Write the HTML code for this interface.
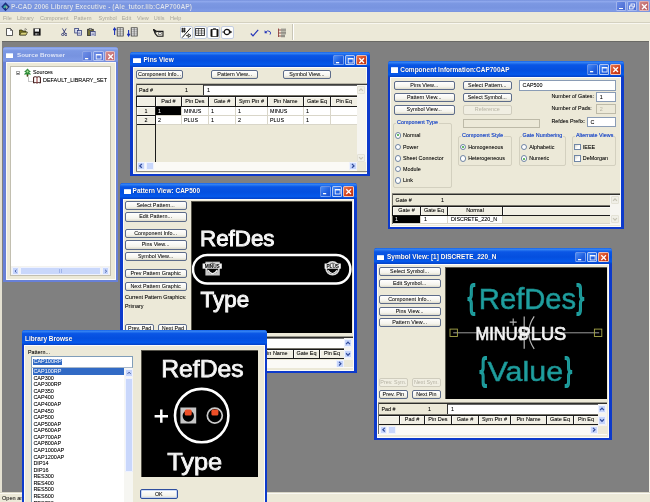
<!DOCTYPE html><html><head><meta charset="utf-8"><title>P-CAD 2006 Library Executive</title><style>
*{box-sizing:border-box;margin:0;padding:0}
html,body{width:650px;height:502px;overflow:hidden;background:#808080;}
body{will-change:transform;position:relative;font-family:"Liberation Sans",sans-serif;font-size:5.4px;color:#000;line-height:1;text-shadow:0 0 0.25px rgba(0,0,0,0.3)}
.a{position:absolute}
.t{position:absolute;white-space:nowrap;line-height:1}
.win{position:absolute;background:#0d3acb;border-radius:3px 3px 0 0;overflow:hidden}
.win .tb{position:absolute;left:0;top:0;right:0;height:16px;background:linear-gradient(#1763e8 0%,#3382f3 9%,#0a56e5 24%,#044fdf 56%,#0558ea 84%,#0340c6 100%)}
.win.in{background:#6880d6}
.win.in .tb{background:linear-gradient(#7a96e2 0%,#93abee 10%,#7b98e3 25%,#7793e0 60%,#7e9ae6 88%,#748cd9 100%)}
.win .cl{position:absolute;left:2.5px;right:2.5px;top:16px;bottom:2.5px;background:#ece9d8;box-shadow:inset 0 0 0 1px #fdfcf8}
.ttl{position:absolute;font-weight:bold;color:#fff;font-size:6.5px;white-space:nowrap;line-height:1;text-shadow:0.4px 0.4px 0 #0a2a80}
.in .ttl{color:#dfe6f8;text-shadow:none}
.wicon{position:absolute;width:7.2px;height:5.2px;background:#fff;border-top:1px solid #cfe0ff;border-radius:0.5px}
.cb{position:absolute;width:10.5px;height:10.5px;border-radius:1.5px;border:1px solid rgba(255,255,255,0.65);background:linear-gradient(135deg,#4b8cf5,#1f5fe0 60%,#1a4fcf)}
.cb.x{background:linear-gradient(135deg,#e8774f,#d3421c 60%,#b93313)}
.in .cb{background:linear-gradient(135deg,#6f8fe6,#4f70d6);border-color:rgba(235,240,255,0.6)}
.in .cb.x{background:linear-gradient(135deg,#d48d8d,#c0626a)}
.btn{position:absolute;border:1px solid #5d6c8a;border-radius:2px;background:linear-gradient(#ffffff,#f4f3ec 70%,#dcd9c9);text-align:center;white-space:nowrap;font-size:5.4px;color:#111;overflow:hidden}
.btn.ok{border-color:#2f4f9e;box-shadow:inset 0 0 0 0.8px #bcd0f5}
.btn.dis{text-shadow:none;border-color:#cfccbd;color:#b5b2a3;background:#f0eee2}
.fld{position:absolute;background:#fff;border:0.7px solid #8a9cb5;font-size:5.4px;white-space:nowrap;overflow:hidden}
.fld.dis{text-shadow:none;background:#ece9d8;border-color:#bdbaa8;color:#b5b2a3}
.grp{position:absolute;border:0.7px solid #d3d0bf;border-radius:2px}
.gl{position:absolute;text-shadow:0 0 0.25px rgba(24,70,200,0.7);color:#1846c8;background:#ece9d8;font-size:5.4px;white-space:nowrap;line-height:1;padding:0 1px}
.rd{position:absolute;width:6.4px;height:6.4px;border-radius:50%;border:1px solid #7288a8;background:radial-gradient(#fff 55%,#dcdad0)}
.rd.on::after{content:"";position:absolute;left:1.2px;top:1.2px;width:2px;height:2px;border-radius:50%;background:#35a535}
.ck{position:absolute;width:6.4px;height:6.4px;border:1px solid #6f86a6;background:linear-gradient(135deg,#dcdad0,#fff 60%)}
.grid{position:absolute;background:#ece9d8;border-top:1px solid #55534a;border-left:1px solid #77756a;}
.hc{position:absolute;background:#ece9d8;border:1px solid #1c1c1c;border-top-width:1.2px;text-align:center;font-size:5.4px;white-space:nowrap;overflow:hidden;line-height:1}
.wc{position:absolute;background:#fff;border-right:0.6px solid #d6d3c6;border-bottom:0.6px solid #d6d3c6;font-size:5.4px;white-space:nowrap;overflow:hidden;line-height:1}
.sb{position:absolute;background:#f4f3ee}
.sa{position:absolute;background:#c6d5fb;border:0.5px solid #eef2ff;border-radius:1px}
.sa svg{position:absolute;left:0;top:0;width:100%;height:100%}
.cv{position:absolute;background:#000;overflow:hidden}
.cv .big{position:absolute;color:#fff;white-space:nowrap;line-height:1}
</style></head><body>
<div class="a" style="left:0;top:0;width:650px;height:12px;background:linear-gradient(#7590dc 0%,#8ea7ec 12%,#7b97e2 30%,#7894e0 65%,#7f9be6 90%,#7a93dc 100%)"></div>
<svg class="a" style="left:1px;top:1.5px" width="9" height="9.5" viewBox="0 0 9 9.5"><path d="M4.5 0.3L8.7 4.8L4.5 9.2L0.3 4.8Z" fill="#1b2e7c"/><path d="M2 5.2L4.4 2.6L5.2 4.4L3.6 6.6Z" fill="#35b0a8"/><path d="M5 3.2L7 5L5.4 7.2L4.6 5.4Z" fill="#8fae9a"/></svg>
<div class="t" style="left:11px;top:3.9px;font-weight:bold;font-size:6.68px;color:#dbe3f7;letter-spacing:0.0px" id="mt">P-CAD 2006 Library Executive - (Ale_tutor.lib:CAP700AP)</div>
<div class="a" style="left:616px;top:0.5px;width:9.5px;height:10.5px;border-radius:1.5px;border:1px solid rgba(240,244,255,0.5);background:linear-gradient(135deg,#6d8de6,#4668d2)"><div class="a" style="left:1.8px;top:6px;width:4px;height:1.4px;background:#fff"></div></div>
<div class="a" style="left:627px;top:0.5px;width:9.5px;height:10.5px;border-radius:1.5px;border:1px solid rgba(240,244,255,0.5);background:linear-gradient(135deg,#6d8de6,#4668d2)"><svg class="a" style="left:0;top:0" width="8.3" height="9.3" viewBox="0 0 8.3 9.3"><rect x="3" y="2" width="3.5" height="3" fill="none" stroke="#fff" stroke-width="0.8"/><rect x="1.6" y="4" width="3.5" height="3" fill="#6b89de" stroke="#fff" stroke-width="0.8"/></svg></div>
<div class="a" style="left:638.5px;top:0.5px;width:10px;height:10.5px;border-radius:1.5px;border:1px solid rgba(255,240,240,0.5);background:linear-gradient(135deg,#d08888,#b85860)"><svg class="a" style="left:0;top:0" width="8.8" height="9.3" viewBox="0 0 8.8 9.3"><path d="M2 2.2L6.8 7.2M6.8 2.2L2 7.2" stroke="#fff" stroke-width="1.3" fill="none"/></svg></div>
<div class="a" style="left:0;top:12px;width:650px;height:11px;background:#ece9d8"></div>
<div class="t" style="left:3px;top:15.6px;font-size:5.5px;color:#a7a599;text-shadow:none">File</div>
<div class="t" style="left:17px;top:15.6px;font-size:5.5px;color:#a7a599;text-shadow:none">Library</div>
<div class="t" style="left:40px;top:15.6px;font-size:5.5px;color:#a7a599;text-shadow:none">Component</div>
<div class="t" style="left:73.8px;top:15.6px;font-size:5.5px;color:#a7a599;text-shadow:none">Pattern</div>
<div class="t" style="left:98.5px;top:15.6px;font-size:5.5px;color:#a7a599;text-shadow:none">Symbol</div>
<div class="t" style="left:121.7px;top:15.6px;font-size:5.5px;color:#a7a599;text-shadow:none">Edit</div>
<div class="t" style="left:137px;top:15.6px;font-size:5.5px;color:#a7a599;text-shadow:none">View</div>
<div class="t" style="left:153.8px;top:15.6px;font-size:5.5px;color:#a7a599;text-shadow:none">Utils</div>
<div class="t" style="left:170px;top:15.6px;font-size:5.5px;color:#a7a599;text-shadow:none">Help</div>
<div class="a" style="left:0;top:22.5px;width:650px;height:18.5px;background:#ece9d8;border-top:0.6px solid #f8f7f0"></div>
<div class="a" style="left:0;top:22px;width:650px;height:0.6px;background:#d4d1c0"></div>
<div class="a" style="left:292px;top:24px;width:0.7px;height:16px;background:#c9c6b6"></div>
<div class="a" style="left:292.7px;top:24px;width:0.7px;height:16px;background:#fff"></div>
<svg class="a" style="left:6px;top:28px" width="7" height="8" viewBox="0 0 7 8"><path d="M0.5 0.5H4.5L6.5 2.5V7.5H0.5Z" fill="#fff" stroke="#333" stroke-width="0.8"/><path d="M4.5 0.5V2.5H6.5" fill="none" stroke="#333" stroke-width="0.6"/></svg>
<svg class="a" style="left:19px;top:28px" width="9" height="8" viewBox="0 0 9 8"><path d="M0.5 7V2H3L3.8 3H7V7Z" fill="#7a7420" stroke="#2a2a10" stroke-width="0.7"/><path d="M0.8 7L2.3 4.2H8.6L7 7Z" fill="#d9d27a" stroke="#2a2a10" stroke-width="0.6"/><path d="M5.5 1.2Q6.8 0.4 7.8 1.6" stroke="#222" stroke-width="0.6" fill="none"/></svg>
<svg class="a" style="left:33px;top:28px" width="8" height="8" viewBox="0 0 8 8"><rect x="0.4" y="0.4" width="7.2" height="7.2" fill="#111"/><rect x="1.8" y="0.8" width="4.2" height="2.8" fill="#f0f0f0"/><rect x="2.2" y="5" width="3.4" height="2.4" fill="#8a8a8a"/><rect x="4.4" y="5.3" width="0.9" height="1.8" fill="#111"/></svg>
<svg class="a" style="left:60.6px;top:28px" width="6.6" height="8.4" viewBox="0 0 7 9"><path d="M1.5 0.5L4.6 6M5.5 0.5L2.4 6" stroke="#27306e" stroke-width="0.9" fill="none"/><circle cx="1.8" cy="7" r="1.2" fill="none" stroke="#27306e" stroke-width="0.9"/><circle cx="5.2" cy="7" r="1.2" fill="none" stroke="#27306e" stroke-width="0.9"/></svg>
<svg class="a" style="left:73.6px;top:28.2px" width="8.2" height="7.6" viewBox="0 0 9 9"><rect x="0.5" y="0.5" width="4.6" height="5.4" fill="#dfe3f3" stroke="#2b3675" stroke-width="0.9"/><rect x="3.6" y="3" width="4.8" height="5.5" fill="#eef0fa" stroke="#2b3675" stroke-width="0.9"/><path d="M4.6 5H7.4M4.6 6.6H7.4" stroke="#2b3675" stroke-width="0.6"/></svg>
<svg class="a" style="left:86.8px;top:27.8px" width="9" height="8.6" viewBox="0 0 10 10"><rect x="0.5" y="1.5" width="6.5" height="7.5" fill="#77743a" stroke="#222" stroke-width="0.9"/><rect x="2.2" y="0.6" width="3" height="1.8" fill="#bbb" stroke="#222" stroke-width="0.5"/><rect x="4" y="4" width="5.2" height="5.5" fill="#eef0fa" stroke="#2b3675" stroke-width="0.9"/><path d="M5 6H8.2M5 7.6H8.2" stroke="#2b3675" stroke-width="0.6"/></svg>
<svg class="a" style="left:112.6px;top:27.4px" width="11" height="10" viewBox="0 0 11 10"><path d="M1.6 8V1.6M0.2 3.2L1.6 1L3 3.2" stroke="#1a30b8" stroke-width="1.1" fill="none"/><rect x="4.2" y="0.8" width="6" height="8.2" fill="#fff" stroke="#333" stroke-width="0.8"/><path d="M4.2 2.85H10.2M4.2 4.9H10.2M4.2 6.95H10.2M7.2 0.8V9" stroke="#444" stroke-width="0.6"/></svg>
<svg class="a" style="left:126.6px;top:27.4px" width="11" height="10" viewBox="0 0 11 10"><path d="M1.6 3V8.4M0.2 6.8L1.6 9L3 6.8" stroke="#1a30b8" stroke-width="1.1" fill="none"/><rect x="4.2" y="0.8" width="6" height="8.2" fill="#fff" stroke="#333" stroke-width="0.8"/><path d="M4.2 2.85H10.2M4.2 4.9H10.2M4.2 6.95H10.2M7.2 0.8V9" stroke="#444" stroke-width="0.6"/></svg>
<svg class="a" style="left:153.4px;top:28.6px" width="11" height="8" viewBox="0 0 11 8"><path d="M0.6 0.6L3.8 2.4H10V7.2H4.4L2.2 4.6Z" fill="#e9e6d6" stroke="#1a1a1a" stroke-width="1.1"/><path d="M0.6 0.6L3.2 3.6" stroke="#1a1a1a" stroke-width="1.2"/><rect x="5.4" y="3.8" width="3.2" height="1.8" fill="#fff" stroke="#333" stroke-width="0.5"/></svg>
<div class="a" style="left:180px;top:25.5px;width:13.2px;height:13.5px;background:#fdfdfb;border:1px solid #c3cde0;border-radius:2px"></div>
<div class="a" style="left:193.5px;top:25.5px;width:13.2px;height:13.5px;background:#fdfdfb;border:1px solid #c3cde0;border-radius:2px"></div>
<div class="a" style="left:207px;top:25.5px;width:13.2px;height:13.5px;background:#fdfdfb;border:1px solid #c3cde0;border-radius:2px"></div>
<div class="a" style="left:220.5px;top:25.5px;width:13.2px;height:13.5px;background:#fdfdfb;border:1px solid #c3cde0;border-radius:2px"></div>
<svg class="a" style="left:181px;top:26.5px" width="11.5" height="11.5" viewBox="0 0 11.5 11.5"><path d="M1.6 0.8V5.6M3.4 0.8V5.6M0.4 1.8H4.6M0.4 3.2H4.6M0.4 4.6H4.6" stroke="#111" stroke-width="0.8"/><path d="M1.2 10.6L9.6 1" stroke="#111" stroke-width="1"/><path d="M5 8.6H7.2M7.2 6.8L10 8.6L7.2 10.4Z" stroke="#111" stroke-width="0.8" fill="#fff"/></svg>
<svg class="a" style="left:195.3px;top:28px" width="10" height="8" viewBox="0 0 10 8"><rect x="0.6" y="0.6" width="8.8" height="6.8" fill="#fff" stroke="#222" stroke-width="0.9"/><path d="M0.6 2.9H9.4M0.6 5.1H9.4M3.5 0.6V7.4M6.5 0.6V7.4" stroke="#222" stroke-width="0.6"/></svg>
<svg class="a" style="left:209.6px;top:27.6px" width="9" height="9.4" viewBox="0 0 9 9.4"><rect x="1.3" y="1.6" width="6.4" height="6.8" fill="#fff" stroke="#111" stroke-width="0.7"/><path d="M1.5 1.4V8.6M7.5 1.4V8.6" stroke="#111" stroke-width="1.9"/><path d="M3.4 1.4V0.5H5.6V1.4" stroke="#111" stroke-width="0.7" fill="none"/></svg>
<svg class="a" style="left:222.4px;top:28.2px" width="10.5" height="8" viewBox="0 0 10.5 8"><path d="M0.4 4H2.4M7.4 4H8.6" stroke="#111" stroke-width="1"/><circle cx="4.9" cy="4" r="2.7" fill="#fff" stroke="#111" stroke-width="1.2"/><path d="M8.2 2.4L10.2 4L8.2 5.6Z" fill="#111"/></svg>
<svg class="a" style="left:249.5px;top:29px" width="9" height="8" viewBox="0 0 9 8"><path d="M0.8 4.5L3 6.8L8.2 0.8" stroke="#2233b8" stroke-width="1.2" fill="none"/></svg>
<svg class="a" style="left:263.5px;top:29px" width="8" height="7" viewBox="0 0 8 7"><path d="M1.2 3.5Q3.8 0.6 6 2.6Q7.2 4 6 5.6" stroke="#2233b8" stroke-width="0.9" fill="none"/><path d="M0.6 1.2V4.2H3.4Z" fill="#2233b8"/></svg>
<svg class="a" style="left:277px;top:27.5px" width="10" height="10" viewBox="0 0 10 10"><path d="M1.5 0.5V9M1.5 2H4M1.5 5H4M1.5 8H4" stroke="#7a1a1a" stroke-width="0.7" fill="none"/><path d="M4 1.2H9M4 2.8H9M4 4.3H9M4 5.8H9M4 7.3H8M4 8.7H8" stroke="#333" stroke-width="0.6"/></svg>
<div class="a" style="left:0;top:41px;width:650px;height:451px;background:#808080;border-top:1px solid #6a6a66"></div>
<div class="a" style="left:0;top:41px;width:1.5px;height:451px;background:#e4e1d2"></div>
<div class="a" style="left:649px;top:41px;width:1px;height:451px;background:#f4f2e8"></div>
<div class="a" style="left:0;top:492px;width:650px;height:10px;background:#ece9d8;border-top:1px solid #d8d5c6"></div>
<div class="a" style="left:0;top:493px;width:650px;height:0.8px;background:#faf9f3"></div>
<div class="t" style="left:2px;top:495.6px;font-size:5.6px;color:#222">Open an</div>
<div class="win in" style="left:3px;top:47.3px;width:115px;height:235.2px">
<div class="tb" style="height:14.8px"></div>
<div class="wicon" style="left:3.2px;top:5.5px"></div>
<div class="ttl" style="left:14px;top:4.7px;font-size:6.26px">Source Browser</div>
<div class="cb" style="left:78.5px;top:3.4px;border-color:rgba(255,255,255,0.32)"><svg class="a" style="left:0;top:0" width="9.3" height="9.3" viewBox="0 0 9.3 9.3"><rect x="2" y="6" width="3.2" height="1.3" fill="#fff"/></svg></div>
<div class="cb" style="left:90px;top:3.4px"><svg class="a" style="left:0;top:0" width="9.3" height="9.3" viewBox="0 0 9.3 9.3"><rect x="2.2" y="2.6" width="4.9" height="4.4" fill="none" stroke="#fff" stroke-width="0.8"/><rect x="2.2" y="2.2" width="4.9" height="1.2" fill="#fff"/></svg></div>
<div class="cb x" style="left:101.5px;top:3.4px"><svg class="a" style="left:0;top:0" width="9.3" height="9.3" viewBox="0 0 9.3 9.3"><path d="M2.3 2.3L7 7M7 2.3L2.3 7" stroke="#fff" stroke-width="1.3" fill="none"/></svg></div>
<div class="cl" style="top:14.8px;left:2.5px;right:2.5px;bottom:2.5px">
<div class="a" style="left:0;top:0;width:1px;height:100%;background:#fbfaf5"></div>
<div class="a" style="left:4.6px;top:4.4px;width:101px;height:209.2px;background:#fff;border:1px solid #c2bfb0"></div>
<div class="a" style="left:10px;top:8.6px;width:4.4px;height:4.4px;border:1px solid #a8a8a8;background:#fff"></div><div class="a" style="left:11.2px;top:10.5px;width:2px;height:0.7px;background:#666"></div>
<div class="a" style="left:22px;top:14.5px;width:0.6px;height:4.5px;background:#c4c4c4"></div><div class="a" style="left:22px;top:18.6px;width:5px;height:0.6px;background:#c4c4c4"></div>
<svg class="a" style="left:17.2px;top:6.2px" width="9" height="9" viewBox="0 0 9 9"><path d="M4.5 0.5L1 4H3L0.8 6.5H3.8V8.5H5.2V6.5H8.2L6 4H8Z" fill="#2f8f3a"/><rect x="3.8" y="6.5" width="1.4" height="2" fill="#5a3a1a"/><circle cx="4.5" cy="3.5" r="1" fill="#b7e3a0"/></svg>
<div class="t" style="left:27.5px;top:8.3px;font-size:5.4px">Sources</div>
<svg class="a" style="left:27px;top:14.4px" width="8" height="8" viewBox="0 0 8 8"><path d="M0.6 1.2Q2.3 0.2 4 1.2Q5.7 0.2 7.4 1.2V7Q5.7 6 4 7Q2.3 6 0.6 7Z" fill="#fff" stroke="#3a1010" stroke-width="1"/><path d="M4 1.2V7" stroke="#7a1a1a" stroke-width="0.9"/></svg>
<div class="t" style="left:37.5px;top:16.3px;font-size:5.46px" id="dls">DEFAULT_LIBRARY_SET</div>
<div class="sb" style="left:5.6px;top:204.4px;width:99px;height:8.8px"></div>
<div class="sa" style="left:6.4px;top:204.5px;width:7.6px;height:8.4px"><svg viewBox="0 0 8.4 8.4"><path d="M5.2 2.2L3 4.2L5.2 6.2" stroke="#2f4a9a" stroke-width="1.3" fill="none"/></svg></div>
<div class="sa" style="left:96.2px;top:204.5px;width:7.6px;height:8.4px"><svg viewBox="0 0 8.4 8.4"><path d="M3.2 2.2L5.4 4.2L3.2 6.2" stroke="#2f4a9a" stroke-width="1.3" fill="none"/></svg></div>
<div class="a" style="left:14.4px;top:204.5px;width:81.4px;height:8.4px;background:#c9d7fb;border:0.5px solid #eef2ff;border-radius:1px"></div><div class="a" style="left:53.5px;top:207px;width:3px;height:3.5px;border-left:0.6px solid #9fb4ea;border-right:0.6px solid #9fb4ea"></div>
</div></div>
<div class="win " style="left:130.3px;top:52px;width:239.7px;height:124px">
<div class="tb" style="height:15px"></div>
<div class="wicon" style="left:3.2px;top:5.5px"></div>
<div class="ttl" style="left:13.2px;top:4.7px;font-size:6.5px">Pins View</div>
<div class="cb" style="left:203.2px;top:2.8px;border-color:rgba(255,255,255,0.32)"><svg class="a" style="left:0;top:0" width="9.3" height="9.3" viewBox="0 0 9.3 9.3"><rect x="2" y="6" width="3.2" height="1.3" fill="#fff"/></svg></div>
<div class="cb" style="left:214.7px;top:2.8px"><svg class="a" style="left:0;top:0" width="9.3" height="9.3" viewBox="0 0 9.3 9.3"><rect x="2.2" y="2.6" width="4.9" height="4.4" fill="none" stroke="#fff" stroke-width="0.8"/><rect x="2.2" y="2.2" width="4.9" height="1.2" fill="#fff"/></svg></div>
<div class="cb x" style="left:226.2px;top:2.8px"><svg class="a" style="left:0;top:0" width="9.3" height="9.3" viewBox="0 0 9.3 9.3"><path d="M2.3 2.3L7 7M7 2.3L2.3 7" stroke="#fff" stroke-width="1.3" fill="none"/></svg></div>
<div class="cl" style="top:15px;left:2.5px;right:2.5px;bottom:2.5px">
<div class="btn " style="left:3.4px;top:3.2px;width:46.6px;height:8.8px;line-height:7.200000000000001px">Component Info...</div>
<div class="btn " style="left:78.2px;top:3.2px;width:47.4px;height:8.8px;line-height:7.200000000000001px">Pattern View...</div>
<div class="btn " style="left:150.2px;top:3.2px;width:47.6px;height:8.8px;line-height:7.200000000000001px">Symbol View...</div>
<div class="a" style="left:3.2px;top:16px;width:231px;height:1px;background:#b9b6a8;"></div>
<div class="a" style="left:3.2px;top:17px;width:231px;height:1px;background:#3e3e3c;"></div>
<div class="a" style="left:3.2px;top:17px;width:1px;height:87px;background:#6f6d64;"></div>
<div class="t" style="left:6.2px;top:21.2px;">Pad #</div>
<div class="t" style="left:52.2px;top:21.2px;">1</div>
<div class="a" style="left:70.2px;top:18px;width:1px;height:10px;background:#333;"></div>
<div class="a" style="left:71.2px;top:18px;width:153px;height:1px;background:#666;"></div>
<div class="a" style="left:71.2px;top:19px;width:153px;height:9px;background:#fff;"></div>
<div class="t" style="left:74.2px;top:21.2px;">1</div>
<div class="a" style="left:3.2px;top:28px;width:221px;height:1px;background:#77756c;"></div>
<div class="a" style="left:3.2px;top:29px;width:221px;height:11px;background:#1b1b1b;"></div>
<div class="a" style="left:4.2px;top:30px;width:18px;height:9px;background:#f1efe4;box-shadow:inset 1px 1px 0 #fbfaf5;text-align:center;white-space:nowrap;overflow:hidden;line-height:8.4px;font-size:5.5px"></div>
<div class="a" style="left:23.2px;top:30px;width:25px;height:9px;background:#f1efe4;box-shadow:inset 1px 1px 0 #fbfaf5;text-align:center;white-space:nowrap;overflow:hidden;line-height:8.4px;font-size:5.5px">Pad #</div>
<div class="a" style="left:49.2px;top:30px;width:26px;height:9px;background:#f1efe4;box-shadow:inset 1px 1px 0 #fbfaf5;text-align:center;white-space:nowrap;overflow:hidden;line-height:8.4px;font-size:5.5px">Pin Des</div>
<div class="a" style="left:76.2px;top:30px;width:26px;height:9px;background:#f1efe4;box-shadow:inset 1px 1px 0 #fbfaf5;text-align:center;white-space:nowrap;overflow:hidden;line-height:8.4px;font-size:5.5px">Gate #</div>
<div class="a" style="left:103.2px;top:30px;width:31px;height:9px;background:#f1efe4;box-shadow:inset 1px 1px 0 #fbfaf5;text-align:center;white-space:nowrap;overflow:hidden;line-height:8.4px;font-size:5.5px">Sym Pin #</div>
<div class="a" style="left:135.2px;top:30px;width:35px;height:9px;background:#f1efe4;box-shadow:inset 1px 1px 0 #fbfaf5;text-align:center;white-space:nowrap;overflow:hidden;line-height:8.4px;font-size:5.5px">Pin Name</div>
<div class="a" style="left:171.2px;top:30px;width:26px;height:9px;background:#f1efe4;box-shadow:inset 1px 1px 0 #fbfaf5;text-align:center;white-space:nowrap;overflow:hidden;line-height:8.4px;font-size:5.5px">Gate Eq</div>
<div class="a" style="left:198.2px;top:30px;width:26px;height:9px;background:#f1efe4;box-shadow:inset 1px 1px 0 #fbfaf5;text-align:center;white-space:nowrap;overflow:hidden;line-height:8.4px;font-size:5.5px">Pin Eq</div>
<div class="a" style="left:4.2px;top:40px;width:18px;height:8px;background:#f1efe4;box-shadow:inset 1px 1px 0 #fbfaf5"></div>
<div class="t" style="left:11.7px;top:41.6px;">1</div>
<div class="a" style="left:4.2px;top:48px;width:19px;height:1px;background:#1b1b1b;"></div>
<div class="a" style="left:22.2px;top:40px;width:1px;height:9px;background:#1b1b1b;"></div>
<div class="a" style="left:23.2px;top:40px;width:201px;height:8px;background:#fff;"></div>
<div class="a" style="left:23.2px;top:48px;width:201px;height:1px;background:#d9d6c9;"></div>
<div class="a" style="left:23.2px;top:40px;width:25px;height:8px;background:#000;"></div>
<div class="t" style="left:25.2px;top:41.6px;color:#fff;text-shadow:none">1</div>
<div class="a" style="left:48.2px;top:40px;width:1px;height:9px;background:#d9d6c9;"></div>
<div class="t" style="left:51.2px;top:41.6px;">MINUS</div>
<div class="a" style="left:75.2px;top:40px;width:1px;height:9px;background:#d9d6c9;"></div>
<div class="t" style="left:78.2px;top:41.6px;">1</div>
<div class="a" style="left:102.2px;top:40px;width:1px;height:9px;background:#d9d6c9;"></div>
<div class="t" style="left:105.2px;top:41.6px;">1</div>
<div class="a" style="left:134.2px;top:40px;width:1px;height:9px;background:#d9d6c9;"></div>
<div class="t" style="left:137.2px;top:41.6px;">MINUS</div>
<div class="a" style="left:170.2px;top:40px;width:1px;height:9px;background:#d9d6c9;"></div>
<div class="t" style="left:173.2px;top:41.6px;">1</div>
<div class="a" style="left:197.2px;top:40px;width:1px;height:9px;background:#d9d6c9;"></div>
<div class="a" style="left:4.2px;top:49px;width:18px;height:8px;background:#f1efe4;box-shadow:inset 1px 1px 0 #fbfaf5"></div>
<div class="t" style="left:11.7px;top:50.6px;">2</div>
<div class="a" style="left:4.2px;top:57px;width:19px;height:1px;background:#1b1b1b;"></div>
<div class="a" style="left:22.2px;top:49px;width:1px;height:9px;background:#1b1b1b;"></div>
<div class="a" style="left:23.2px;top:49px;width:201px;height:8px;background:#fff;"></div>
<div class="a" style="left:23.2px;top:57px;width:201px;height:1px;background:#d9d6c9;"></div>
<div class="t" style="left:25.2px;top:50.6px;">2</div>
<div class="a" style="left:48.2px;top:49px;width:1px;height:9px;background:#d9d6c9;"></div>
<div class="t" style="left:51.2px;top:50.6px;">PLUS</div>
<div class="a" style="left:75.2px;top:49px;width:1px;height:9px;background:#d9d6c9;"></div>
<div class="t" style="left:78.2px;top:50.6px;">1</div>
<div class="a" style="left:102.2px;top:49px;width:1px;height:9px;background:#d9d6c9;"></div>
<div class="t" style="left:105.2px;top:50.6px;">2</div>
<div class="a" style="left:134.2px;top:49px;width:1px;height:9px;background:#d9d6c9;"></div>
<div class="t" style="left:137.2px;top:50.6px;">PLUS</div>
<div class="a" style="left:170.2px;top:49px;width:1px;height:9px;background:#d9d6c9;"></div>
<div class="t" style="left:173.2px;top:50.6px;">1</div>
<div class="a" style="left:197.2px;top:49px;width:1px;height:9px;background:#d9d6c9;"></div>
<div class="a" style="left:4.2px;top:58px;width:18px;height:37px;background:#ece9d8;"></div>
<div class="a" style="left:22.2px;top:58px;width:1px;height:37px;background:#1b1b1b;"></div>
<div class="a" style="left:224.2px;top:18px;width:9px;height:77px;background:#f5f4ef;"></div>
<div class="a" style="left:224.7px;top:19px;width:8px;height:8px;background:#f0efe7;border:1px solid #e4e2d6;border-radius:1px"><svg class="a" style="left:-1px;top:-1px;width:8px;height:8px" viewBox="0 0 8.4 8.4"><path d="M2.2 5.2L4.2 3L6.2 5.2" stroke="#c6c4b5" stroke-width="1.3" fill="none"/></svg></div>
<div class="a" style="left:224.7px;top:86.5px;width:8px;height:8px;background:#f0efe7;border:1px solid #e4e2d6;border-radius:1px"><svg class="a" style="left:-1px;top:-1px;width:8px;height:8px" viewBox="0 0 8.4 8.4"><path d="M2.2 3.2L4.2 5.4L6.2 3.2" stroke="#c6c4b5" stroke-width="1.3" fill="none"/></svg></div>
<div class="a" style="left:4.2px;top:95px;width:220px;height:8.5px;background:#fbfaf6;"></div>
<div class="a" style="left:224.2px;top:95px;width:9px;height:8.5px;background:#ece9d8;"></div>
<div class="a" style="left:4.7px;top:95.3px;width:7.8px;height:7.8px;background:#c6d5fb;border:1px solid #eef2ff;border-radius:1px"><svg class="a" style="left:-1px;top:-1px;width:7.8px;height:7.8px" viewBox="0 0 8.4 8.4"><path d="M5.2 2.2L3 4.2L5.2 6.2" stroke="#2f4a9a" stroke-width="1.3" fill="none"/></svg></div>
<div class="a" style="left:13.0px;top:95.3px;width:8.7px;height:7.9px;background:#c9d7fb;border:1px solid #eef2ff;border-radius:1px"></div>
<div class="a" style="left:216.2px;top:95.3px;width:7.8px;height:7.8px;background:#c6d5fb;border:1px solid #eef2ff;border-radius:1px"><svg class="a" style="left:-1px;top:-1px;width:7.8px;height:7.8px" viewBox="0 0 8.4 8.4"><path d="M3.2 2.2L5.4 4.2L3.2 6.2" stroke="#2f4a9a" stroke-width="1.3" fill="none"/></svg></div>
<div class="a" style="left:3.2px;top:103.5px;width:231px;height:0.5px;background:#fbfaf6;"></div>
<div class="a" style="left:3.2px;top:104px;width:231px;height:1px;background:#8c8a80;"></div>
</div></div>
<div class="win " style="left:387.5px;top:61.4px;width:236px;height:168px">
<div class="tb" style="height:15.6px"></div>
<div class="wicon" style="left:3.2px;top:6.1px"></div>
<div class="ttl" style="left:12.7px;top:5.3px;font-size:6.5px">Component Information:CAP700AP</div>
<div class="cb" style="left:199.5px;top:3px;border-color:rgba(255,255,255,0.32)"><svg class="a" style="left:0;top:0" width="9.3" height="9.3" viewBox="0 0 9.3 9.3"><rect x="2" y="6" width="3.2" height="1.3" fill="#fff"/></svg></div>
<div class="cb" style="left:211px;top:3px"><svg class="a" style="left:0;top:0" width="9.3" height="9.3" viewBox="0 0 9.3 9.3"><rect x="2.2" y="2.6" width="4.9" height="4.4" fill="none" stroke="#fff" stroke-width="0.8"/><rect x="2.2" y="2.2" width="4.9" height="1.2" fill="#fff"/></svg></div>
<div class="cb x" style="left:222.5px;top:3px"><svg class="a" style="left:0;top:0" width="9.3" height="9.3" viewBox="0 0 9.3 9.3"><path d="M2.3 2.3L7 7M7 2.3L2.3 7" stroke="#fff" stroke-width="1.3" fill="none"/></svg></div>
<div class="cl" style="top:15.6px;left:2.5px;right:2.5px;bottom:2.5px">
<div class="btn " style="left:3.5px;top:3.6px;width:61.5px;height:9.4px;line-height:7.800000000000001px">Pins View...</div>
<div class="btn " style="left:3.5px;top:15.8px;width:61.5px;height:9.4px;line-height:7.800000000000001px">Pattern View...</div>
<div class="btn " style="left:3.5px;top:28.2px;width:61.5px;height:9.4px;line-height:7.800000000000001px">Symbol View...</div>
<div class="btn " style="left:73px;top:3.6px;width:48.5px;height:9.4px;line-height:7.800000000000001px">Select Pattern...</div>
<div class="btn " style="left:73px;top:15.8px;width:48.5px;height:9.4px;line-height:7.800000000000001px">Select Symbol...</div>
<div class="btn dis" style="left:73px;top:28.2px;width:48.5px;height:9.4px;line-height:7.800000000000001px">Reference</div>
<div class="fld" style="left:129px;top:3.2px;width:97px;height:10.4px;padding:1.8px 0 0 2.5px">CAP500</div>
<div class="fld dis" style="left:73px;top:41.6px;width:76.5px;height:9.8px"></div>
<div class="t" style="left:161.4px;top:17.5px">Number of Gates:</div>
<div class="fld " style="left:206.2px;top:15.2px;width:19.6px;height:9.8px;padding:2.2px 0 0 2.5px">1</div>
<div class="t" style="left:161.4px;top:29.5px">Number of Pads:</div>
<div class="fld dis" style="left:206.2px;top:27.2px;width:19.6px;height:9.8px;padding:2.2px 0 0 2.5px">2</div>
<div class="t" style="left:161.4px;top:42.5px">Refdes Prefix:</div>
<div class="fld " style="left:197px;top:40.2px;width:28.8px;height:9.8px;padding:2.2px 0 0 2.5px">C</div>
<div class="grp" style="left:3px;top:46px;width:58.5px;height:65px"></div>
<div class="gl" style="left:6px;top:43.2px">Component Type</div>
<div class="grp" style="left:67.5px;top:59px;width:54px;height:30px"></div>
<div class="gl" style="left:71px;top:56.2px">Component Style</div>
<div class="grp" style="left:129px;top:59px;width:46.8px;height:30px"></div>
<div class="gl" style="left:131.6px;top:56.2px">Gate Numbering</div>
<div class="grp" style="left:182px;top:59px;width:44px;height:30px"></div>
<div class="gl" style="left:185px;top:56.2px">Alternate Views</div>
<div class="rd on" style="left:4.8px;top:55.2px"></div><div class="t" style="left:13.0px;top:56.3px">Normal</div>
<div class="rd" style="left:4.8px;top:66.8px"></div><div class="t" style="left:13.0px;top:67.9px">Power</div>
<div class="rd" style="left:4.8px;top:78.4px"></div><div class="t" style="left:13.0px;top:79.5px">Sheet Connector</div>
<div class="rd" style="left:4.8px;top:89.0px"></div><div class="t" style="left:13.0px;top:90.1px">Module</div>
<div class="rd" style="left:4.8px;top:100.4px"></div><div class="t" style="left:13.0px;top:101.5px">Link</div>
<div class="rd on" style="left:70px;top:66.8px"></div><div class="t" style="left:78.2px;top:67.9px">Homogeneous</div>
<div class="rd" style="left:70px;top:78.4px"></div><div class="t" style="left:78.2px;top:79.5px">Heterogeneous</div>
<div class="rd" style="left:131px;top:66.8px"></div><div class="t" style="left:139.2px;top:67.9px">Alphabetic</div>
<div class="rd on" style="left:131px;top:78.4px"></div><div class="t" style="left:139.2px;top:79.5px">Numeric</div>
<div class="ck" style="left:184.4px;top:66.8px"></div><div class="t" style="left:192.8px;top:67.9px">IEEE</div>
<div class="ck" style="left:184.4px;top:78.4px"></div><div class="t" style="left:192.8px;top:79.5px">DeMorgan</div>
<div class="a" style="left:2px;top:116px;width:228px;height:1px;background:#8f8d83;"></div>
<div class="a" style="left:2px;top:117px;width:228px;height:1px;background:#2e2e2c;"></div>
<div class="a" style="left:2px;top:117px;width:1px;height:30.5px;background:#6f6d64;"></div>
<div class="t" style="left:5.5px;top:121px;">Gate #</div>
<div class="t" style="left:51px;top:121px;">1</div>
<div class="a" style="left:2px;top:128px;width:218px;height:1px;background:#77756c;"></div>
<div class="a" style="left:2px;top:129px;width:218px;height:10px;background:#1b1b1b;"></div>
<div class="a" style="left:3px;top:130px;width:27px;height:8px;background:#f1efe4;box-shadow:inset 1px 1px 0 #fbfaf5;text-align:center;white-space:nowrap;overflow:hidden;line-height:7.4px;font-size:5.5px">Gate #</div>
<div class="a" style="left:31px;top:130px;width:26px;height:8px;background:#f1efe4;box-shadow:inset 1px 1px 0 #fbfaf5;text-align:center;white-space:nowrap;overflow:hidden;line-height:7.4px;font-size:5.5px">Gate Eq</div>
<div class="a" style="left:58px;top:130px;width:54px;height:8px;background:#f1efe4;box-shadow:inset 1px 1px 0 #fbfaf5;text-align:center;white-space:nowrap;overflow:hidden;line-height:7.4px;font-size:5.5px">Normal</div>
<div class="a" style="left:113px;top:130px;width:107px;height:8px;background:#f1efe4;box-shadow:inset 1px 1px 0 #fbfaf5;text-align:center;white-space:nowrap;overflow:hidden;line-height:7.4px;font-size:5.5px"></div>
<div class="a" style="left:3px;top:139px;width:27px;height:7px;background:#000;"></div>
<div class="t" style="left:5px;top:139.8px;color:#fff;text-shadow:none">1</div>
<div class="a" style="left:30px;top:139px;width:1px;height:7px;background:#d9d6c9;"></div>
<div class="a" style="left:31px;top:139px;width:26px;height:7px;background:#fff;"></div>
<div class="t" style="left:34px;top:139.8px;">1</div>
<div class="a" style="left:57px;top:139px;width:1px;height:7px;background:#d9d6c9;"></div>
<div class="a" style="left:58px;top:139px;width:54px;height:7px;background:#fff;"></div>
<div class="t" style="left:61px;top:139.8px;">DISCRETE_220_N</div>
<div class="a" style="left:112px;top:139px;width:1px;height:7px;background:#d9d6c9;"></div>
<div class="a" style="left:3px;top:146px;width:217px;height:1px;background:#d9d6c9;"></div>
<div class="a" style="left:220px;top:118px;width:10px;height:29.5px;background:#f6f5f0;"></div>
<div class="a" style="left:220.8px;top:119px;width:8px;height:8px;background:#f0efe7;border:1px solid #e4e2d6;border-radius:1px"><svg class="a" style="left:-1px;top:-1px;width:8px;height:8px" viewBox="0 0 8.4 8.4"><path d="M2.2 5.2L4.2 3L6.2 5.2" stroke="#c6c4b5" stroke-width="1.3" fill="none"/></svg></div>
<div class="a" style="left:220.8px;top:138.5px;width:8px;height:8px;background:#f0efe7;border:1px solid #e4e2d6;border-radius:1px"><svg class="a" style="left:-1px;top:-1px;width:8px;height:8px" viewBox="0 0 8.4 8.4"><path d="M2.2 3.2L4.2 5.4L6.2 3.2" stroke="#c6c4b5" stroke-width="1.3" fill="none"/></svg></div>
<div class="a" style="left:2px;top:147px;width:228px;height:0.8px;background:#fbfaf6;"></div>
</div></div>
<div class="win " style="left:120.4px;top:182.6px;width:236.6px;height:190.9px">
<div class="tb" style="height:16px"></div>
<div class="wicon" style="left:3.2px;top:6.1px"></div>
<div class="ttl" style="left:12.2px;top:5.3px;font-size:6.5px">Pattern View: CAP500</div>
<div class="cb" style="left:200.1px;top:3.6px;border-color:rgba(255,255,255,0.32)"><svg class="a" style="left:0;top:0" width="9.3" height="9.3" viewBox="0 0 9.3 9.3"><rect x="2" y="6" width="3.2" height="1.3" fill="#fff"/></svg></div>
<div class="cb" style="left:211.6px;top:3.6px"><svg class="a" style="left:0;top:0" width="9.3" height="9.3" viewBox="0 0 9.3 9.3"><rect x="2.2" y="2.6" width="4.9" height="4.4" fill="none" stroke="#fff" stroke-width="0.8"/><rect x="2.2" y="2.2" width="4.9" height="1.2" fill="#fff"/></svg></div>
<div class="cb x" style="left:223.1px;top:3.6px"><svg class="a" style="left:0;top:0" width="9.3" height="9.3" viewBox="0 0 9.3 9.3"><path d="M2.3 2.3L7 7M7 2.3L2.3 7" stroke="#fff" stroke-width="1.3" fill="none"/></svg></div>
<div class="cl" style="top:16px;left:2.5px;right:2.5px;bottom:2.5px">
<div class="btn " style="left:1.7px;top:2.4px;width:62px;height:9.2px;line-height:7.6px">Select Pattern...</div>
<div class="btn " style="left:1.7px;top:13.9px;width:62px;height:9.2px;line-height:7.6px">Edit Pattern...</div>
<div class="btn " style="left:1.7px;top:30.7px;width:62px;height:9.2px;line-height:7.6px">Component Info...</div>
<div class="btn " style="left:1.7px;top:41.9px;width:62px;height:9.2px;line-height:7.6px">Pins View...</div>
<div class="btn " style="left:1.7px;top:53.6px;width:62px;height:9.2px;line-height:7.6px">Symbol View...</div>
<div class="btn " style="left:1.7px;top:70.6px;width:62px;height:9.2px;line-height:7.6px">Prev Pattern Graphic</div>
<div class="btn " style="left:1.7px;top:83.2px;width:62px;height:9.2px;line-height:7.6px">Next Pattern Graphic</div>
<div class="t" style="left:2.1px;top:96.7px">Current Pattern Graphics:</div>
<div class="t" style="left:2.1px;top:105.0px">Primary</div>
<div class="btn " style="left:2.1px;top:125.4px;width:29.5px;height:9.2px;line-height:7.6px">Prev. Pad</div>
<div class="btn " style="left:35.5px;top:125.4px;width:29px;height:9.2px;line-height:7.6px">Next Pad</div>
<div class="cv" style="left:67.9px;top:2.9px;width:161.6px;height:132px;border-top:0.8px solid #55534a;border-left:0.8px solid #55534a">
<svg class="a" style="left:0;top:0" width="162" height="132" viewBox="191.60000000000002 202.3 162 132">
<text x="199.6" y="246.8" font-family="Liberation Sans, sans-serif" font-size="22.6" fill="#fff" stroke="#fff" stroke-width="0.9" textLength="74.5" lengthAdjust="spacingAndGlyphs">RefDes</text>
<text x="200.2" y="307.7" font-family="Liberation Sans, sans-serif" font-size="22.8" fill="#fff" stroke="#fff" stroke-width="0.9" textLength="48.5" lengthAdjust="spacingAndGlyphs">Type</text>
<rect x="192.6" y="255.3" width="157.4" height="28.5" rx="14.25" fill="none" stroke="#fff" stroke-width="2.5"/>
<rect x="205" y="262" width="14.4" height="13.8" fill="#c9c9c9"/><circle cx="212.2" cy="268.6" r="5.5" fill="#000"/><path d="M207.6 270.4Q212.2 277.4 216.8 270.4" fill="none" stroke="#f2f2f2" stroke-width="1.3"/><rect x="202.2" y="263.8" width="19.2" height="5.2" fill="#f4f4f4"/>
<text x="211.8" y="268.3" font-family="Liberation Sans, sans-serif" font-size="4.7" font-weight="bold" text-anchor="middle" fill="#111">MINUS</text>
<circle cx="332.1" cy="268.6" r="6.4" fill="#000" stroke="#d9d9d9" stroke-width="1.7"/><path d="M327.6 270.6Q332.1 277 336.6 270.6" fill="none" stroke="#f2f2f2" stroke-width="1.2"/><rect x="324.2" y="263.8" width="16.2" height="5.2" fill="#f4f4f4"/>
<text x="332.3" y="268.3" font-family="Liberation Sans, sans-serif" font-size="4.7" font-weight="bold" text-anchor="middle" fill="#111">PLUS</text>
</svg>
</div>
<div class="a" style="left:68.1px;top:137.4px;width:162px;height:1px;background:#9a988d;"></div>
<div class="a" style="left:68.1px;top:138.4px;width:162px;height:1px;background:#2e2e2c;"></div>
<div class="a" style="left:68.1px;top:139.4px;width:153px;height:1px;background:#777;"></div>
<div class="a" style="left:68.1px;top:140.4px;width:153px;height:9px;background:#fff;"></div>
<div class="a" style="left:68.1px;top:149.4px;width:153px;height:1px;background:#77756c;"></div>
<div class="a" style="left:68.1px;top:150.4px;width:153px;height:10px;background:#1b1b1b;"></div>
<div class="a" style="left:102.1px;top:151.4px;width:32px;height:8px;background:#f1efe4;box-shadow:inset 1px 1px 0 #fbfaf5;text-align:center;white-space:nowrap;overflow:hidden;line-height:7.4px;font-size:5.5px">Sym Pin #</div>
<div class="a" style="left:135.1px;top:151.4px;width:35px;height:8px;background:#f1efe4;box-shadow:inset 1px 1px 0 #fbfaf5;text-align:center;white-space:nowrap;overflow:hidden;line-height:7.4px;font-size:5.5px">Pin Name</div>
<div class="a" style="left:171.1px;top:151.4px;width:25px;height:8px;background:#f1efe4;box-shadow:inset 1px 1px 0 #fbfaf5;text-align:center;white-space:nowrap;overflow:hidden;line-height:7.4px;font-size:5.5px">Gate Eq</div>
<div class="a" style="left:197.1px;top:151.4px;width:24px;height:8px;background:#f1efe4;box-shadow:inset 1px 1px 0 #fbfaf5;text-align:center;white-space:nowrap;overflow:hidden;line-height:7.4px;font-size:5.5px">Pin Eq</div>
<div class="a" style="left:221.1px;top:139.4px;width:9px;height:22px;background:#f5f4ef;"></div>
<div class="a" style="left:221.5px;top:140.4px;width:8px;height:8.4px;background:#c6d5fb;border:1px solid #eef2ff;border-radius:1px"><svg class="a" style="left:-1px;top:-1px;width:8px;height:8.4px" viewBox="0 0 8.4 8.4"><path d="M2.2 5.2L4.2 3L6.2 5.2" stroke="#2f4a9a" stroke-width="1.3" fill="none"/></svg></div>
<div class="a" style="left:221.5px;top:151.4px;width:8px;height:8.4px;background:#c6d5fb;border:1px solid #eef2ff;border-radius:1px"><svg class="a" style="left:-1px;top:-1px;width:8px;height:8.4px" viewBox="0 0 8.4 8.4"><path d="M2.2 3.2L4.2 5.4L6.2 3.2" stroke="#2f4a9a" stroke-width="1.3" fill="none"/></svg></div>
<div class="a" style="left:68.1px;top:161.4px;width:153px;height:7.5px;background:#fbfaf6;"></div>
<div class="a" style="left:221.1px;top:161.4px;width:9px;height:7.5px;background:#ece9d8;"></div>
<div class="a" style="left:213.1px;top:161.6px;width:7.8px;height:7.4px;background:#c6d5fb;border:1px solid #eef2ff;border-radius:1px"><svg class="a" style="left:-1px;top:-1px;width:7.8px;height:7.4px" viewBox="0 0 8.4 8.4"><path d="M3.2 2.2L5.4 4.2L3.2 6.2" stroke="#2f4a9a" stroke-width="1.3" fill="none"/></svg></div>
<div class="a" style="left:68.1px;top:168.9px;width:162px;height:0.9px;background:#fbfaf6;"></div>
</div></div>
<div class="win " style="left:374px;top:248px;width:237.5px;height:192.3px">
<div class="tb" style="height:16.4px"></div>
<div class="wicon" style="left:3.2px;top:6.5px"></div>
<div class="ttl" style="left:13px;top:5.7px;font-size:6.5px">Symbol View: [1] DISCRETE_220_N</div>
<div class="cb" style="left:201.0px;top:3.6px;border-color:rgba(255,255,255,0.32)"><svg class="a" style="left:0;top:0" width="9.3" height="9.3" viewBox="0 0 9.3 9.3"><rect x="2" y="6" width="3.2" height="1.3" fill="#fff"/></svg></div>
<div class="cb" style="left:212.5px;top:3.6px"><svg class="a" style="left:0;top:0" width="9.3" height="9.3" viewBox="0 0 9.3 9.3"><rect x="2.2" y="2.6" width="4.9" height="4.4" fill="none" stroke="#fff" stroke-width="0.8"/><rect x="2.2" y="2.2" width="4.9" height="1.2" fill="#fff"/></svg></div>
<div class="cb x" style="left:224.0px;top:3.6px"><svg class="a" style="left:0;top:0" width="9.3" height="9.3" viewBox="0 0 9.3 9.3"><path d="M2.3 2.3L7 7M7 2.3L2.3 7" stroke="#fff" stroke-width="1.3" fill="none"/></svg></div>
<div class="cl" style="top:16.4px;left:2.5px;right:2.5px;bottom:2.5px">
<div class="btn " style="left:2.1px;top:2.6px;width:62px;height:9.2px;line-height:7.6px">Select Symbol...</div>
<div class="btn " style="left:2.1px;top:14.2px;width:62px;height:9.2px;line-height:7.6px">Edit Symbol...</div>
<div class="btn " style="left:2.1px;top:30.8px;width:62px;height:9.2px;line-height:7.6px">Component Info...</div>
<div class="btn " style="left:2.1px;top:42.2px;width:62px;height:9.2px;line-height:7.6px">Pins View...</div>
<div class="btn " style="left:2.1px;top:53.8px;width:62px;height:9.2px;line-height:7.6px">Pattern View...</div>
<div class="btn dis" style="left:2.1px;top:113.6px;width:29.5px;height:9.2px;line-height:7.6px">Prev. Sym.</div>
<div class="btn dis" style="left:35.1px;top:113.6px;width:29.5px;height:9.2px;line-height:7.6px">Next Sym.</div>
<div class="btn " style="left:2.1px;top:125.6px;width:29.5px;height:9.4px;line-height:7.800000000000001px">Prev. Pin</div>
<div class="btn " style="left:35.1px;top:125.6px;width:29.5px;height:9.4px;line-height:7.800000000000001px">Next Pin</div>
<div class="cv" style="left:68.5px;top:3.0px;width:162px;height:131.6px;border-top:0.8px solid #55534a;border-left:0.8px solid #55534a">
<svg class="a" style="left:0;top:0" width="162" height="131" viewBox="445.8 268.2 162 131">
<text x="478.6" y="309.2" font-family="Liberation Sans, sans-serif" font-size="28.6" fill="#1fa0a0" stroke="#1fa0a0" stroke-width="0.5" textLength="97.4" lengthAdjust="spacingAndGlyphs">RefDes</text>
<text transform="translate(467.6,308.4) scale(0.66,1)" font-family="Liberation Sans, sans-serif" font-size="33" fill="#1fa0a0" stroke="#1fa0a0" stroke-width="1.9">{</text>
<text transform="translate(576.6,308.4) scale(0.66,1)" font-family="Liberation Sans, sans-serif" font-size="33" fill="#1fa0a0" stroke="#1fa0a0" stroke-width="1.9">}</text>
<text x="487.4" y="380.9" font-family="Liberation Sans, sans-serif" font-size="28.4" fill="#1fa0a0" stroke="#1fa0a0" stroke-width="0.5" textLength="75.5" lengthAdjust="spacingAndGlyphs">Value</text>
<text transform="translate(479.6,380.2) scale(0.66,1)" font-family="Liberation Sans, sans-serif" font-size="31.5" fill="#1fa0a0" stroke="#1fa0a0" stroke-width="1.9">{</text>
<text transform="translate(564.8,380.2) scale(0.66,1)" font-family="Liberation Sans, sans-serif" font-size="31.5" fill="#1fa0a0" stroke="#1fa0a0" stroke-width="1.9">}</text>
<path d="M453 333H599" stroke="#9a9a9a" stroke-width="1"/><rect x="449.8" y="329.3" width="7.4" height="7.4" fill="none" stroke="#a8a84a" stroke-width="0.9"/><rect x="594.2" y="329.3" width="7.4" height="7.4" fill="none" stroke="#a8a84a" stroke-width="0.9"/><path d="M524 316.6V349" stroke="#b8b8b8" stroke-width="1.2"/><path d="M534 316.6Q523 333 534 349" stroke="#b8b8b8" stroke-width="1.2" fill="none"/><path d="M509.5 322.3H516.5M513 318.8V325.8" stroke="#b8b8b8" stroke-width="1.1"/>
<text x="475.4" y="340.2" font-family="Liberation Sans, sans-serif" font-size="18.4" fill="#fff" stroke="#fff" stroke-width="0.7" textLength="53" lengthAdjust="spacingAndGlyphs">MINUS</text>
<text x="518.4" y="340.2" font-family="Liberation Sans, sans-serif" font-size="18.4" fill="#fff" stroke="#fff" stroke-width="0.7" textLength="47.6" lengthAdjust="spacingAndGlyphs">PLUS</text>
</svg>
</div>
<div class="a" style="left:1.5px;top:137.6px;width:229px;height:1px;background:#9a988d;"></div>
<div class="a" style="left:1.5px;top:138.6px;width:229px;height:1px;background:#2e2e2c;"></div>
<div class="a" style="left:1.5px;top:138.6px;width:1px;height:32px;background:#6f6d64;"></div>
<div class="t" style="left:5.0px;top:142.9px;">Pad #</div>
<div class="t" style="left:51.5px;top:142.9px;">1</div>
<div class="a" style="left:70.5px;top:139.6px;width:1px;height:10px;background:#333;"></div>
<div class="a" style="left:71.5px;top:139.6px;width:150px;height:1px;background:#666;"></div>
<div class="a" style="left:71.5px;top:140.6px;width:150px;height:9px;background:#fff;"></div>
<div class="t" style="left:74.5px;top:142.9px;">1</div>
<div class="a" style="left:2.5px;top:149.6px;width:219px;height:1px;background:#77756c;"></div>
<div class="a" style="left:2.5px;top:150.6px;width:219px;height:10px;background:#1b1b1b;"></div>
<div class="a" style="left:2.5px;top:151.6px;width:20px;height:8px;background:#f1efe4;box-shadow:inset 1px 1px 0 #fbfaf5;text-align:center;white-space:nowrap;overflow:hidden;line-height:7.4px;font-size:5.5px"></div>
<div class="a" style="left:23.5px;top:151.6px;width:24px;height:8px;background:#f1efe4;box-shadow:inset 1px 1px 0 #fbfaf5;text-align:center;white-space:nowrap;overflow:hidden;line-height:7.4px;font-size:5.5px">Pad #</div>
<div class="a" style="left:48.5px;top:151.6px;width:26px;height:8px;background:#f1efe4;box-shadow:inset 1px 1px 0 #fbfaf5;text-align:center;white-space:nowrap;overflow:hidden;line-height:7.4px;font-size:5.5px">Pin Des</div>
<div class="a" style="left:75.5px;top:151.6px;width:26px;height:8px;background:#f1efe4;box-shadow:inset 1px 1px 0 #fbfaf5;text-align:center;white-space:nowrap;overflow:hidden;line-height:7.4px;font-size:5.5px">Gate #</div>
<div class="a" style="left:102.5px;top:151.6px;width:31px;height:8px;background:#f1efe4;box-shadow:inset 1px 1px 0 #fbfaf5;text-align:center;white-space:nowrap;overflow:hidden;line-height:7.4px;font-size:5.5px">Sym Pin #</div>
<div class="a" style="left:134.5px;top:151.6px;width:35px;height:8px;background:#f1efe4;box-shadow:inset 1px 1px 0 #fbfaf5;text-align:center;white-space:nowrap;overflow:hidden;line-height:7.4px;font-size:5.5px">Pin Name</div>
<div class="a" style="left:170.5px;top:151.6px;width:26px;height:8px;background:#f1efe4;box-shadow:inset 1px 1px 0 #fbfaf5;text-align:center;white-space:nowrap;overflow:hidden;line-height:7.4px;font-size:5.5px">Gate Eq</div>
<div class="a" style="left:197.5px;top:151.6px;width:24px;height:8px;background:#f1efe4;box-shadow:inset 1px 1px 0 #fbfaf5;text-align:center;white-space:nowrap;overflow:hidden;line-height:7.4px;font-size:5.5px">Pin Eq</div>
<div class="a" style="left:221.5px;top:139.6px;width:9px;height:22px;background:#f5f4ef;"></div>
<div class="a" style="left:221.9px;top:140.6px;width:8px;height:8.4px;background:#c6d5fb;border:1px solid #eef2ff;border-radius:1px"><svg class="a" style="left:-1px;top:-1px;width:8px;height:8.4px" viewBox="0 0 8.4 8.4"><path d="M2.2 5.2L4.2 3L6.2 5.2" stroke="#2f4a9a" stroke-width="1.3" fill="none"/></svg></div>
<div class="a" style="left:221.9px;top:152.0px;width:8px;height:8.4px;background:#c6d5fb;border:1px solid #eef2ff;border-radius:1px"><svg class="a" style="left:-1px;top:-1px;width:8px;height:8.4px" viewBox="0 0 8.4 8.4"><path d="M2.2 3.2L4.2 5.4L6.2 3.2" stroke="#2f4a9a" stroke-width="1.3" fill="none"/></svg></div>
<div class="a" style="left:2.5px;top:161.6px;width:219px;height:7.6px;background:#fbfaf6;"></div>
<div class="a" style="left:221.5px;top:161.6px;width:9px;height:7.6px;background:#ece9d8;"></div>
<div class="a" style="left:3.0px;top:161.8px;width:7.8px;height:7.4px;background:#c6d5fb;border:1px solid #eef2ff;border-radius:1px"><svg class="a" style="left:-1px;top:-1px;width:7.8px;height:7.4px" viewBox="0 0 8.4 8.4"><path d="M5.2 2.2L3 4.2L5.2 6.2" stroke="#2f4a9a" stroke-width="1.3" fill="none"/></svg></div>
<div class="a" style="left:11.3px;top:161.8px;width:8.7px;height:7.4px;background:#c9d7fb;border:1px solid #eef2ff;border-radius:1px"></div>
<div class="a" style="left:213.5px;top:161.8px;width:7.8px;height:7.4px;background:#c6d5fb;border:1px solid #eef2ff;border-radius:1px"><svg class="a" style="left:-1px;top:-1px;width:7.8px;height:7.4px" viewBox="0 0 8.4 8.4"><path d="M3.2 2.2L5.4 4.2L3.2 6.2" stroke="#2f4a9a" stroke-width="1.3" fill="none"/></svg></div>
<div class="a" style="left:1.5px;top:169.2px;width:229px;height:1.4px;background:#fbfaf6;"></div>
</div></div>
<div class="win " style="left:22px;top:329.6px;width:244.5px;height:180px">
<div class="tb" style="height:15.4px"></div>
<div class="ttl" style="left:3px;top:6.0px;font-size:6.5px">Library Browse</div>
<div class="cl" style="top:15.4px;left:2px;right:2px;bottom:2px">
<div class="t" style="left:4px;top:5px">Pattern...</div>
<div class="fld" style="left:7.2px;top:11.2px;width:101.6px;height:11.4px;border-color:#7f9db9;border-bottom:none"><span class="a" style="left:0.8px;top:1.6px;background:#316ac5;color:#fff;text-shadow:none;padding:0.6px 0.5px 0.4px 0.5px;font-size:5.5px;line-height:1">CAP100RP</span></div>
<div class="a" style="left:7.2px;top:22.4px;width:101.6px;height:140px;background:#fff;border:1px solid #7f9db9;border-top-color:#a9b8c9">
<div class="a" style="left:0.6px;top:0;width:91.5px;height:6.8px;background:#316ac5"></div>
<div class="t" style="left:1.2px;top:0.75px;font-size:5.5px;color:#fff;text-shadow:none">CAP100RP</div>
<div class="t" style="left:1.2px;top:7.32px;font-size:5.5px;color:#000">CAP300</div>
<div class="t" style="left:1.2px;top:13.89px;font-size:5.5px;color:#000">CAP300RP</div>
<div class="t" style="left:1.2px;top:20.46px;font-size:5.5px;color:#000">CAP350</div>
<div class="t" style="left:1.2px;top:27.03px;font-size:5.5px;color:#000">CAP400</div>
<div class="t" style="left:1.2px;top:33.6px;font-size:5.5px;color:#000">CAP400AP</div>
<div class="t" style="left:1.2px;top:40.17px;font-size:5.5px;color:#000">CAP450</div>
<div class="t" style="left:1.2px;top:46.74px;font-size:5.5px;color:#000">CAP500</div>
<div class="t" style="left:1.2px;top:53.31px;font-size:5.5px;color:#000">CAP500AP</div>
<div class="t" style="left:1.2px;top:59.88px;font-size:5.5px;color:#000">CAP600AP</div>
<div class="t" style="left:1.2px;top:66.45px;font-size:5.5px;color:#000">CAP700AP</div>
<div class="t" style="left:1.2px;top:73.02px;font-size:5.5px;color:#000">CAP800AP</div>
<div class="t" style="left:1.2px;top:79.59px;font-size:5.5px;color:#000">CAP1000AP</div>
<div class="t" style="left:1.2px;top:86.16px;font-size:5.5px;color:#000">CAP1200AP</div>
<div class="t" style="left:1.2px;top:92.73px;font-size:5.5px;color:#000">DIP14</div>
<div class="t" style="left:1.2px;top:99.3px;font-size:5.5px;color:#000">DIP16</div>
<div class="t" style="left:1.2px;top:105.87px;font-size:5.5px;color:#000">RES300</div>
<div class="t" style="left:1.2px;top:112.44px;font-size:5.5px;color:#000">RES400</div>
<div class="t" style="left:1.2px;top:119.01px;font-size:5.5px;color:#000">RES500</div>
<div class="t" style="left:1.2px;top:125.58px;font-size:5.5px;color:#000">RES600</div>
<div class="t" style="left:1.2px;top:132.15px;font-size:5.5px;color:#000">RES700</div>
<div class="sb" style="left:92.2px;top:0;width:8.6px;height:140px;background:#f6f6f2"></div>
<div class="sa" style="left:92.4px;top:0.6px;width:8.2px;height:8.2px"><svg viewBox="0 0 8.4 8.4"><path d="M2.2 5.2L4.2 3L6.2 5.2" stroke="#2f4a9a" stroke-width="1.3" fill="none"/></svg></div>
<div class="a" style="left:92.4px;top:9.2px;width:8.2px;height:94px;background:#c9d7fb;border:0.5px solid #eef2ff;border-radius:1px"></div>
</div>
<div class="cv" style="left:117.2px;top:5.2px;width:116.4px;height:127px;border-top:0.8px solid #55534a;border-left:0.8px solid #55534a">
<svg class="a" style="left:0;top:0" width="116" height="127" viewBox="142 351 116 127">
<text x="161.2" y="377" font-family="Liberation Sans, sans-serif" font-size="23.2" fill="#fff" stroke="#fff" stroke-width="0.75" textLength="82.4" lengthAdjust="spacingAndGlyphs">RefDes</text>
<text x="167.2" y="470.1" font-family="Liberation Sans, sans-serif" font-size="24.2" fill="#fff" stroke="#fff" stroke-width="0.75" textLength="55" lengthAdjust="spacingAndGlyphs">Type</text>
<circle cx="201.7" cy="415.6" r="26.7" fill="none" stroke="#fff" stroke-width="2.6"/><path d="M154.6 416.2H168M161.3 409.6V422.8" stroke="#fff" stroke-width="2.5"/>
<rect x="180.4" y="407.5" width="15.8" height="16" fill="#c6c6c6"/><circle cx="188.3" cy="416" r="5.7" fill="#000"/><rect x="184.7" y="409.6" width="7" height="6" rx="1.6" fill="#ee4f27"/>
<circle cx="214.8" cy="415.6" r="7.5" fill="#000" stroke="#c9c9c9" stroke-width="1.7"/><rect x="211.4" y="409.6" width="7" height="6" rx="1.6" fill="#ee4f27"/>
</svg>
</div>
<div class="btn ok" style="left:116px;top:143.8px;width:37.6px;height:10.2px;line-height:8.6px">OK</div>
</div></div>
</body></html>
